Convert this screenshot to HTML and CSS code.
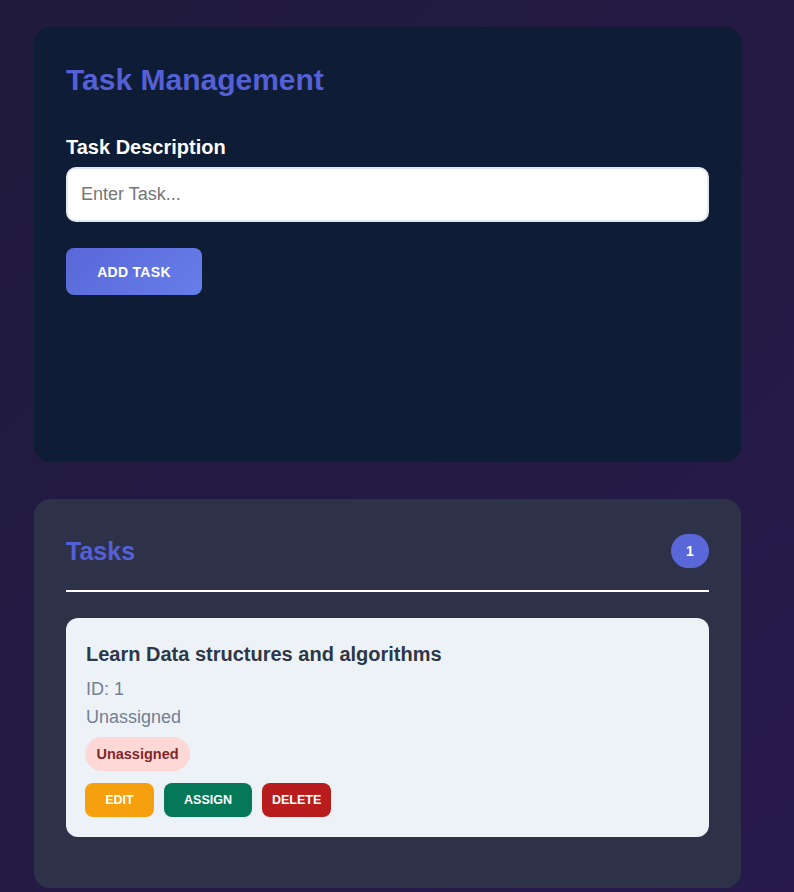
FILE: index.html
```html
<!DOCTYPE html>
<html lang="en">
<head>
<meta charset="utf-8">
<title>Task Management</title>
<link rel="stylesheet" href="styles.css">
</head>
<body>
<main class="layout">
  <section class="panel panel-form">
    <h1 class="panel-title">Task Management</h1>
    <label class="field-label" for="task">Task Description</label>
    <input class="field-input" id="task" type="text" placeholder="Enter Task...">
    <button class="btn-primary" type="button">Add Task</button>
  </section>

  <section class="panel panel-list">
    <div class="list-header">
      <h2 class="list-title">Tasks</h2>
      <span class="count-badge">1</span>
    </div>
    <div class="task-card">
      <h3 class="task-title">Learn Data structures and algorithms</h3>
      <p class="task-meta">ID: 1</p>
      <p class="task-meta">Unassigned</p>
      <span class="status-pill">Unassigned</span>
      <div class="task-actions">
        <button class="btn-small btn-edit" type="button">Edit</button>
        <button class="btn-small btn-assign" type="button">Assign</button>
        <button class="btn-small btn-delete" type="button">Delete</button>
      </div>
    </div>
  </section>
</main>
</body>
</html>
```

FILE: styles.css
```css
* { box-sizing: border-box; }

html, body {
  margin: 0;
  height: 100%;
}

body {
  font-family: "Liberation Sans", Arial, sans-serif;
  background: linear-gradient(135deg, #201a3c 0%, #231a44 50%, #281a4d 100%);
  min-height: 892px;
}

.layout {
  display: flex;
  flex-direction: column;
  gap: 37px;
  padding: 27px 53px 0 34px;
}

.panel {
  border-radius: 16px;
  padding: 32px;
}

.panel-form {
  background: #0e1c35;
  min-height: 435px;
  display: flex;
  flex-direction: column;
  align-items: flex-start;
}

.panel-title {
  margin: 0 0 34px;
  font-size: 30px;
  line-height: 42px;
  font-weight: 700;
  color: #5460d6;
}

.field-label {
  font-size: 20px;
  font-weight: 700;
  color: #ffffff;
  line-height: 24px;
  margin-bottom: 8px;
}

.field-input {
  width: 100%;
  height: 55px;
  border: 2px solid #e2e8f0;
  border-radius: 10px;
  padding: 0 13px;
  font-family: inherit;
  font-size: 18px;
  color: #2d3748;
  background: #ffffff;
  outline: none;
}

.field-input::placeholder { color: #757575; }

.btn-primary {
  margin-top: 26px;
  width: 136px;
  height: 47px;
  border: none;
  border-radius: 8px;
  background: linear-gradient(135deg, #5a67d8 0%, #667eea 100%);
  color: #ffffff;
  font-family: inherit;
  font-size: 14px;
  font-weight: 700;
  text-transform: uppercase;
  letter-spacing: 0.3px;
}

.panel-list {
  background: #2e3249;
  padding-bottom: 31px;
}

.list-header {
  display: flex;
  align-items: center;
  justify-content: space-between;
  padding: 3px 0 22px;
  border-bottom: 2px solid #ffffff;
  margin-bottom: 26px;
}

.list-title {
  margin: 0;
  font-size: 25px;
  line-height: 34px;
  font-weight: 700;
  color: #5460d6;
}

.count-badge {
  display: inline-flex;
  align-items: center;
  justify-content: center;
  width: 38px;
  height: 34px;
  border-radius: 17px;
  background: #5a67d8;
  color: #ffffff;
  font-size: 14px;
  font-weight: 700;
}

.task-card {
  background: #edf2f7;
  border-radius: 12px;
  padding: 20px 19px 20px 20px;
  margin-bottom: 20px;
  display: flex;
  flex-direction: column;
  align-items: flex-start;
}

.task-title {
  margin: 0 0 9px;
  font-size: 20px;
  line-height: 32px;
  font-weight: 700;
  color: #2d3748;
}

.task-meta {
  margin: 0 0 7px;
  font-size: 18px;
  line-height: 21px;
  color: #718096;
}

.status-pill {
  margin-top: 2px;
  margin-left: -1px;
  display: inline-flex;
  align-items: center;
  justify-content: center;
  height: 34px;
  width: 105px;
  border-radius: 17px;
  background: #fed7d7;
  color: #822727;
  font-size: 14.5px;
  font-weight: 700;
}

.task-actions {
  display: flex;
  gap: 10px;
  margin-top: 12px;
  margin-left: -1px;
}

.btn-small {
  height: 34px;
  border: none;
  border-radius: 8px;
  padding: 0 10px;
  color: #ffffff;
  font-family: inherit;
  font-size: 12.5px;
  font-weight: 700;
  text-transform: uppercase;
}

.btn-edit { background: #f5a00c; min-width: 69px; }
.btn-assign { background: #047857; min-width: 88px; }
.btn-delete { background: #b91c1c; min-width: 69px; }
```
